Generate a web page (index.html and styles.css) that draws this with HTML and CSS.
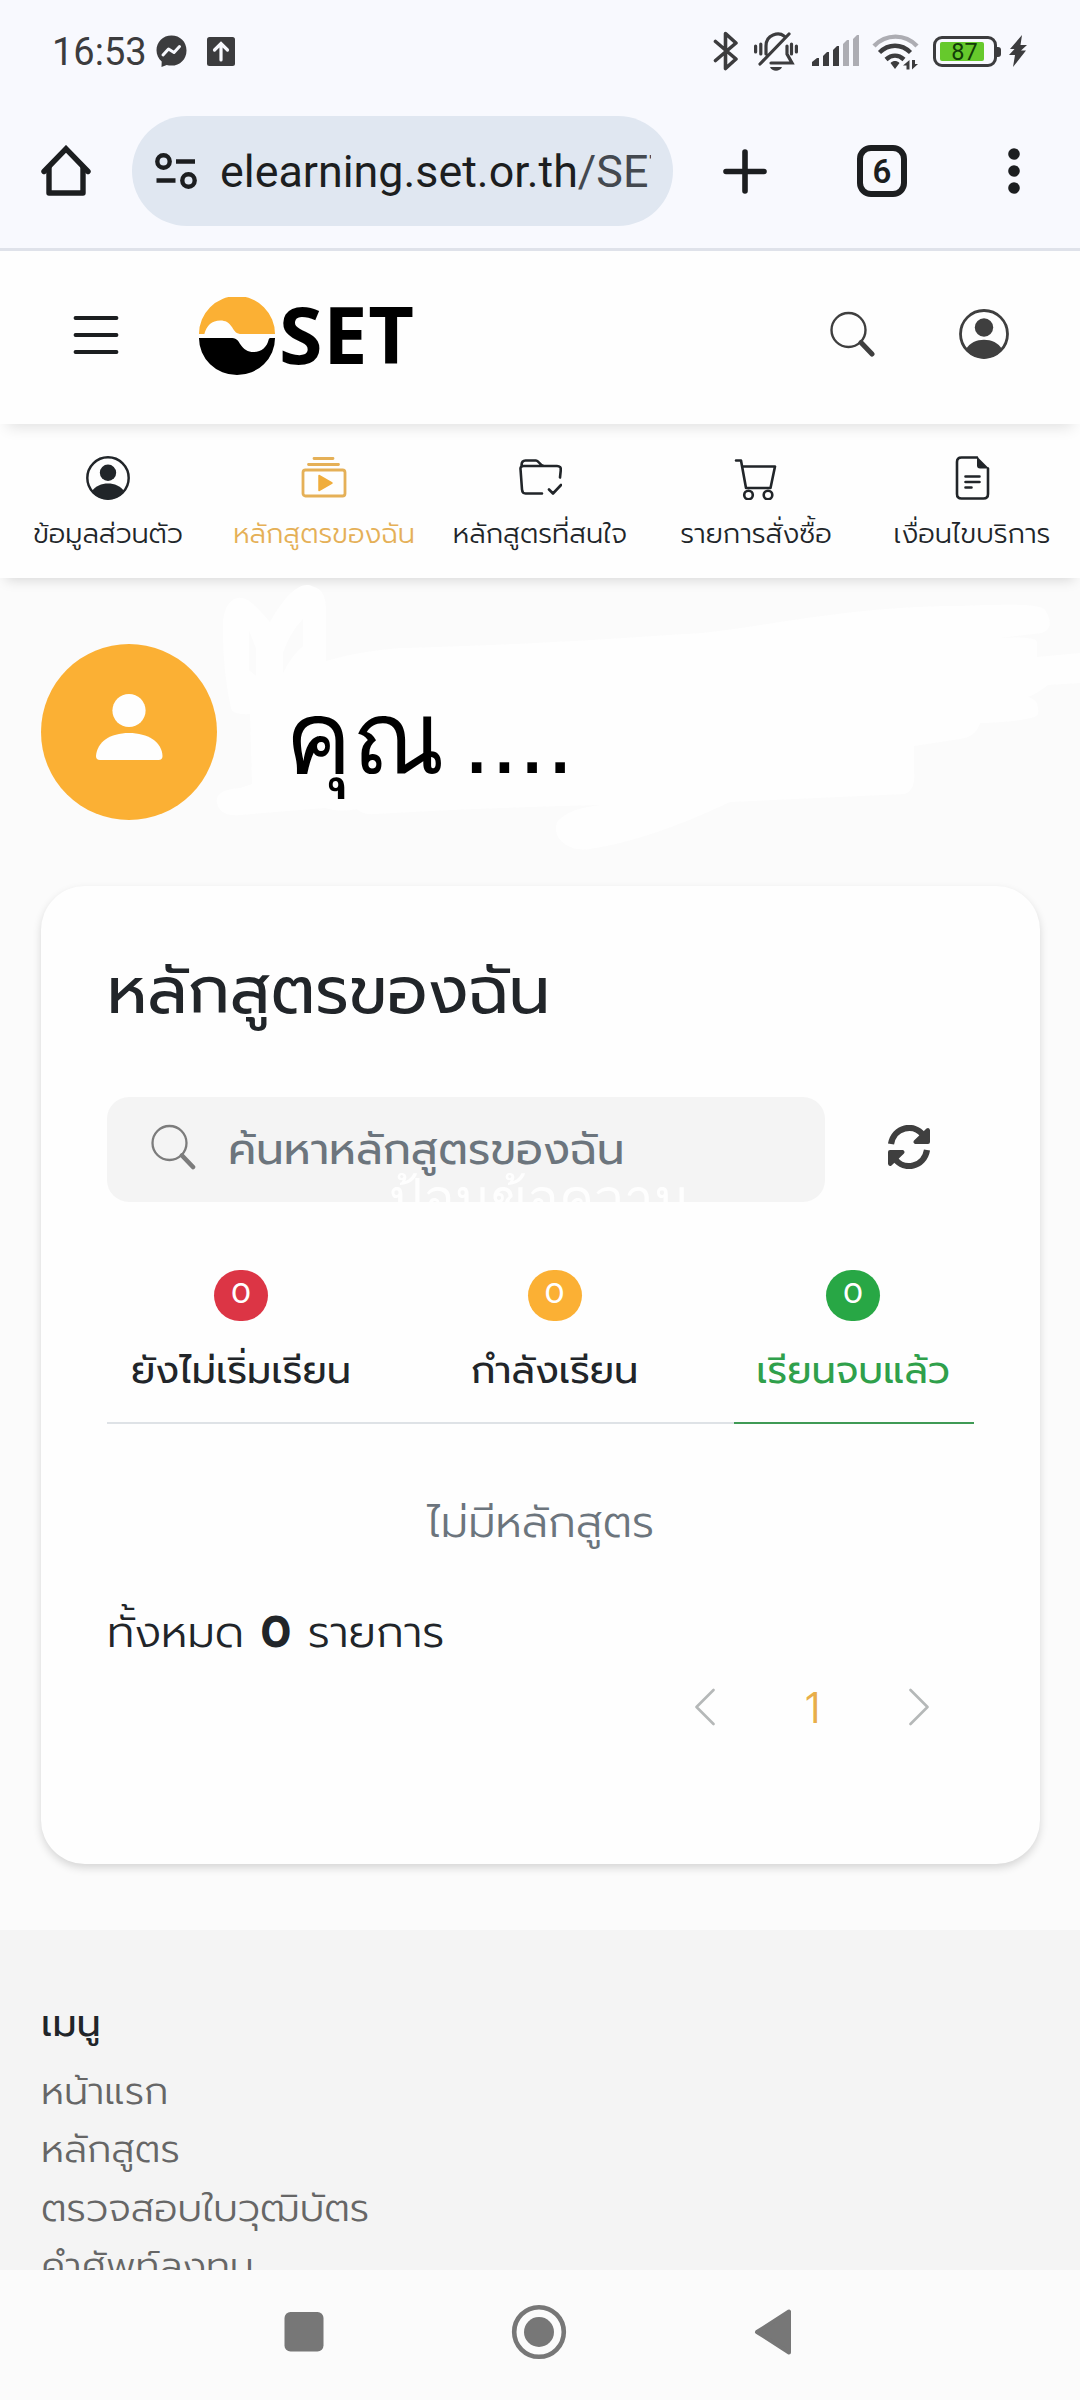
FILE: index.html
```html
<!DOCTYPE html>
<html lang="th">
<head>
<meta charset="utf-8">
<title>SET e-Learning</title>
<link rel="stylesheet" href="styles.css">
</head>
<body>
<div class="screen">
  <div class="status">
    <span class="clock">16:53</span>
    <svg class="messenger" width="31" height="33" viewBox="0 0 31 33"><path fill="#3c3c3e" d="M15.500 0.500C7 .5.5 6.800.5 15.300c0 4.600 2 8.400 5.200 11.200L5.500 32l5.200-2c1.500.4 3.100.6 4.800.6 8.500 0 15-6.500 15-15.200S24 .5 15.500.5z"/><path fill="none" stroke="#f8f9fe" stroke-width="3" stroke-linecap="round" stroke-linejoin="round" d="M7 20l5.500-6 5.500 3.500 5.500-6"/></svg>
    <svg class="upload" width="28" height="29" viewBox="0 0 28 29"><rect width="28" height="29" rx="2.500" fill="#3c3c3e"/><path fill="none" stroke="#f8f9fe" stroke-width="3.200" stroke-linecap="round" d="M14 23V7M7.500 13L14 6.500 20.500 13"/></svg>
    <svg class="bt" width="26" height="40" viewBox="0 0 26 40"><path fill="none" stroke="#3c3c3e" stroke-width="3.600" stroke-linejoin="round" stroke-linecap="round" d="M2.500 10.500L23 28 12.500 37.500V2.500L23 12 2.500 29.500"/></svg>
    <svg class="bell" width="44" height="40" viewBox="0 0 44 40"><g fill="none" stroke="#3c3c3e" stroke-width="3.200" stroke-linecap="round"><path d="M1.600 14v6M6.800 12v10M37.500 12v10M42.400 14v6M6 32L35 2M12 22V14C12 2 25 0 30 4M33 14v8l5 9H17"/></g><path fill="#3c3c3e" d="M16 35h12c-2 5-10 5-12 0z"/></svg>
    <svg class="signal" width="48" height="32" viewBox="0 0 48 32"><g fill="#3c3c3e"><path d="M0 31v-4l5-4h2v8zM11 31V21l4-4h2v14zM21 31V15l4-4h2v20z"/><path fill="#adadb3" d="M31 31V9l4-4h2v26zM41 31V4l4-4h2v31z"/></g></svg>
    <svg class="wifi" width="48" height="36" viewBox="0 0 48 36"><g fill="none" stroke="#3c3c3e" stroke-width="4.400"><path stroke="#adadb3" d="M2 12C14-.5 33-.5 45 12"/><path d="M7.500 18.500c9-9 22-9 31 0M14 25.500c5.500-5 12.500-5 18 0"/></g><path fill="#3c3c3e" d="M18.500 29c3-2.600 6-2.600 9 0L23 35zM37.500 26v9.500h-3v-4H31zM40 35.500V26h3v4h3z"/></svg>
    <span class="battery"><span class="charge">87</span></span>
    <svg class="bolt" width="20" height="32" viewBox="0 0 20 32"><path fill="#3c3c3e" d="M14 0L2 14h4.500L1 20h6L5 32 18 15.500h-5L19 10h-6.500z"/></svg>
  </div>

  <div class="toolbar">
    <svg class="home" width="50" height="52" viewBox="0 0 50 52"><path fill="none" stroke="#1c1e20" stroke-width="5.400" stroke-linejoin="round" d="M8 21v27h34V21"/><path fill="none" stroke="#1c1e20" stroke-width="5.400" stroke-linecap="round" d="M3 26.500L25 3.800 47 26.500"/></svg>
    <div class="url">
      <svg width="42" height="36" viewBox="0 0 42 36"><g fill="none" stroke="#1c1e20" stroke-width="4.400"><circle cx="8.500" cy="8.500" r="6.200"/><circle cx="33.500" cy="27.500" r="6.200"/><path d="M21 8.500h19M1.500 27.500h19"/></g></svg>
      <span class="address">elearning.set.or.th<span class="rest">/SET</span></span>
    </div>
    <svg class="plus" width="44" height="45" viewBox="0 0 44 45"><path stroke="#1c1e20" stroke-width="5.600" stroke-linecap="round" d="M22 3v39M3 22.500h38"/></svg>
    <span class="count">6</span>
    <svg class="dots" width="12" height="46" viewBox="0 0 12 46"><g fill="#1c1e20"><circle cx="6" cy="6" r="5.800"/><circle cx="6" cy="23" r="5.800"/><circle cx="6" cy="40" r="5.800"/></g></svg>
  </div>

  <header class="header">
    <svg class="menu" width="46" height="40" viewBox="0 0 46 40"><path stroke="#1c1e20" stroke-width="3.800" stroke-linecap="round" d="M2.500 3h41M2.500 20h41M2.500 37h41"/></svg>
    <svg class="mark" width="78" height="78" viewBox="0 0 78 80"><path fill="#fbb034" d="M0 38a39 39 0 0 1 78 0H44c-6 0-7.500-3-10-7-3-5-7-7-12-7C13 24 8 29 5.500 38z"/><path fill="#000" d="M0 42h32c6 0 8 2 10 6 4 6 8 8.500 14 8.500 8 0 14-5.500 15.500-13 .4-1.500 1.500-1.500 2.500-1.500h4A39 38 0 0 1 0 42z"/></svg>
    <span class="brand">SET</span>
    <svg class="find" width="45" height="46" viewBox="0 0 45 46"><circle cx="18.500" cy="19" r="17" fill="none" stroke="#3f3f3f" stroke-width="2.400"/><path stroke="#3f3f3f" stroke-width="5" stroke-linecap="round" d="M31 31.500L42 43"/></svg>
    <svg class="account" width="50" height="50" viewBox="0 0 50 50"><circle cx="25" cy="25" r="23.500" fill="none" stroke="#3f3f3f" stroke-width="2.800"/><circle cx="25" cy="18.500" r="9.200" fill="#3f3f3f"/><path fill="#3f3f3f" d="M7 40c7-12.500 29-12.500 36 0-8 12.500-28 12.500-36 0z"/></svg>
  </header>

  <nav class="nav">
    <a class="item"><svg width="44" height="44" viewBox="0 0 50 50"><circle cx="25" cy="25" r="23.500" fill="none" stroke="#212529" stroke-width="2.800"/><circle cx="25" cy="19" r="9.300" fill="#212529"/><path fill="#212529" d="M7 40c7-11.500 29-11.500 36 0-8 12.500-28 12.500-36 0z"/></svg>ข้อมูลส่วนตัว</a>
    <a class="item active"><svg width="46" height="44" viewBox="0 0 46 44"><g fill="none" stroke="#e5b057" stroke-width="2.800" stroke-linecap="round"><path d="M13 2.500h19M7.500 8.500h30"/><rect x="2" y="14" width="42" height="26" rx="2.500"/></g><path fill="#f0ad3c" stroke="#f0ad3c" stroke-width="1.500" stroke-linejoin="round" d="M18 19.500v15L31 27z"/></svg>หลักสูตรของฉัน</a>
    <a class="item"><svg width="44" height="44" viewBox="0 0 44 44"><g fill="none" stroke="#212529" stroke-width="2.600" stroke-linecap="round" stroke-linejoin="round"><path d="M24 37.500H7.500c-2.500 0-3.300-1.500-3.500-4L2.500 13c-.2-2 1-3 3-3H39c3 0 4 1.500 3.800 4L42 21.500M3.500 9.500c0-3.500 1.500-5 4-5H18c3 0 3.500 5 8 5.500M31 33.500l4 4 8-8.500"/></g></svg>หลักสูตรที่สนใจ</a>
    <a class="item"><svg width="44" height="44" viewBox="0 0 44 44"><g fill="none" stroke="#212529" stroke-width="2.600" stroke-linecap="round" stroke-linejoin="round"><path d="M2 4.500h5L12 32h24.500L41 10.500H8.500"/><circle cx="14.500" cy="39" r="4.300"/><circle cx="34" cy="39" r="4.300"/></g></svg>รายการสั่งซื้อ</a>
    <a class="item"><svg width="44" height="44" viewBox="0 0 44 44"><g transform="translate(1)"><path fill="none" stroke="#212529" stroke-width="2.600" stroke-linecap="round" stroke-linejoin="round" d="M26 1.500H10.500C7.500 1.500 6 3 6 6v32c0 3 1.500 4.500 4.500 4.500h22c3 0 4.500-1.500 4.500-4.500V12.500M14.500 20.500h14M14.500 26h14M14.500 31.500h6"/><path fill="#212529" d="M26 .5L38 12.500H29c-2 0-3-1-3-3z"/></g></svg>เงื่อนไขบริการ</a>
  </nav>

  <section class="profile">
    <svg class="brush" viewBox="0 0 1080 308"><path fill="#fefefe" d="M223 43C225 21 240 11 256 29Q265 38 270 44C282 22 300 0 314 9Q326 12 326 32V83Q360 73 400 70C530 67 620 60 702 55C770 48 850 28 960 28Q1040 24 1045 32Q1056 50 1042 55L1000 60Q1036 58 1037 64V79L1080 75V105L1048 107Q1038 115 1028 119Q1040 122 1038 136Q1036 143 980 145Q976 159 960 161L914 168V193Q916 212 905 216L730 224Q650 262 590 271C565 275 550 256 558 243Q570 230 600 227Q480 230 375 236Q362 237 357 231Q340 235 325 230L240 237Q220 239 217 225Q214 212 240 210L252 206L250 136Q232 137 231 130Q222 90 223 43z"/><path fill="#fbfbfb" d="M249 53L256 70V98L249 92zM303 41V68Q292 77 283 95V75Q290 54 303 41z"/></svg>
    <svg class="avatar" width="176" height="176" viewBox="0 0 176 176"><circle cx="88" cy="88" r="88" fill="#fbb034"/><circle cx="88" cy="66.500" r="16.600" fill="#fefefe"/><path fill="#fefefe" d="M59 116q-4 0-4-4c1-14 14-23 33-23s33 9 33.500 23q0 4-4 4z"/></svg>
    <span class="name">คุณ ....</span>
  </section>

  <section class="card">
    <h1>หลักสูตรของฉัน</h1>
    <div class="search-row">
      <div class="search">
        <svg width="45" height="46" viewBox="0 0 45 46"><circle cx="18.500" cy="19" r="17" fill="none" stroke="#7c7c7c" stroke-width="2.300"/><path stroke="#7c7c7c" stroke-width="4.600" stroke-linecap="round" d="M31 31.500L42 43"/></svg>
        <span>ค้นหาหลักสูตรของฉัน</span>
        <span class="ghost">ป้อนข้อความ</span>
      </div>
      <svg class="refresh" width="44" height="44" viewBox="0 0 44 44"><g fill="none" stroke="#3f3f3f" stroke-width="6.200"><path d="M4 19C7 1.500 27-2 36 10M40 25C37 42.500 17 46 8 34"/></g><path fill="#3f3f3f" d="M43 5v12q0 2-2 2H28q-2.500-1.500-1-3.500L39.500 3.500Q42 2 43 5zM1 39V27q0-2 2-2h13q2.500 1.500 1 3.500L4.500 40.500Q2 42 1 39z"/></svg>
    </div>
    <div class="tabs">
      <div class="tab"><span class="badge red">0</span><span class="label">ยังไม่เริ่มเรียน</span></div>
      <div class="tab"><span class="badge orange">0</span><span class="label">กำลังเรียน</span></div>
      <div class="tab current"><span class="badge green">0</span><span class="label">เรียนจบแล้ว</span></div>
    </div>
    <p class="empty">ไม่มีหลักสูตร</p>
    <p class="total">ทั้งหมด <b>0</b> รายการ</p>
    <div class="pager">
      <svg width="20" height="38" viewBox="0 0 20 38"><path fill="none" stroke="#b5b8b8" stroke-width="2.600" stroke-linecap="round" stroke-linejoin="round" d="M18.500 2L1.500 19l17 17"/></svg>
      <span>1</span>
      <svg width="20" height="38" viewBox="0 0 20 38"><path fill="none" stroke="#b5b8b8" stroke-width="2.600" stroke-linecap="round" stroke-linejoin="round" d="M1.500 2l17 17-17 17"/></svg>
    </div>
  </section>

  <footer class="footer">
    <h2>เมนู</h2>
    <a>หน้าแรก</a>
    <a>หลักสูตร</a>
    <a>ตรวจสอบใบวุฒิบัตร</a>
    <a>คำศัพท์ลงทุน</a>
  </footer>

  <div class="system">
    <svg width="40" height="56" viewBox="0 0 40 56"><rect x=".5" y="8" width="39" height="39.500" rx="6" fill="#777"/></svg>
    <svg width="56" height="56" viewBox="0 0 56 56"><circle cx="28" cy="28" r="24.800" fill="none" stroke="#777" stroke-width="4.600"/><circle cx="28" cy="28" r="15" fill="#777"/></svg>
    <svg width="38" height="56" viewBox="0 0 38 56"><path fill="#777" stroke="#777" stroke-width="4" stroke-linejoin="round" d="M35 7.500v41L3 28z"/></svg>
  </div>
</div>
</body>
</html>
```
FILE: styles.css
```css
* { box-sizing: border-box; }
body { margin: 0; background: #fbfbfb; }
svg { display: block; flex: none; }
h1, h2, p { margin: 0; }

.screen {
  width: 1080px;
  height: 2400px;
  display: flex;
  flex-direction: column;
  overflow: hidden;
  background: #fbfbfb;
  color: #212529;
  font-family: Prompt, "Noto Sans Thai", "Open Sans", sans-serif;
  font-weight: 300;
}
.screen > * { flex: none; }

.status {
  height: 102px;
  padding-left: 52px;
  display: flex;
  align-items: center;
  background: #f8f9fe;
}
.clock {
  width: 104px;
  font: 400 38px/44px Roboto, sans-serif;
  color: #3c3c3e;
  padding-top: 2px;
}
.upload { margin-left: 20px; }
.bt { margin-left: 478px; }
.bell { margin-left: 15px; margin-top: 2px; }
.signal { margin-left: 14px; }
.wifi { margin-left: 12px; margin-top: 2px; }
.battery {
  position: relative;
  width: 64px;
  height: 31px;
  margin-left: 13px;
  padding: 4px;
  border: 3px solid #3c3c3e;
  border-radius: 9px;
}
.battery::after {
  content: "";
  position: absolute;
  left: 61px;
  top: 8px;
  width: 4px;
  height: 10px;
  border-radius: 0 3px 3px 0;
  background: #3c3c3e;
}
.charge {
  display: block;
  width: 44px;
  height: 19px;
  margin-top: -1px;
  padding-left: 5px;
  border-radius: 2px;
  background: #66c92c;
  color: #123c08;
  font: 400 23.500px/21px Roboto, sans-serif;
  text-align: center;
}
.bolt { margin-left: 11px; }

.toolbar {
  height: 149px;
  padding: 14px 0 0 41px;
  display: flex;
  align-items: flex-start;
  background: #f8f9fe;
  border-bottom: 3px solid #dfe2ea;
}
.home { margin-top: 29px; }
.url {
  width: 541px;
  height: 110px;
  margin-left: 41px;
  padding: 0 22px 0 23px;
  display: flex;
  align-items: center;
  border-radius: 55px;
  background: #e0e7f1;
}
.address {
  flex: 1;
  height: 70px;
  margin: 2px 0 0 23px;
  overflow: hidden;
  white-space: nowrap;
  font: 400 44.800px/70px Roboto, sans-serif;
  color: #1c1e20;
}
.rest { color: #444950; }
.plus { margin: 33px 0 0 50px; }
.count {
  width: 50px;
  height: 52px;
  margin: 29px 0 0 90px;
  border: 6px solid #1c1e20;
  border-radius: 14px;
  font: 600 33px/42px Roboto, sans-serif;
  text-align: center;
  color: #1c1e20;
}
.dots { margin: 32px 0 0 101px; }

.header {
  position: relative;
  height: 173px;
  padding-left: 73px;
  display: flex;
  align-items: center;
  background: #fefefe;
  box-shadow: 0 10px 14px -7px rgba(0, 0, 0, .12);
}
.menu { margin-top: -5px; }
.mark { margin: -3px 0 0 79px; }
.brand {
  width: 140px;
  margin: -7px 0 0 3px;
  font: 700 79px/80px "Open Sans", sans-serif;
  letter-spacing: .8px;
  color: #000;
}
.find { margin: -7px 0 0 411px; }
.account { margin: -8px 0 0 84px; }

.nav {
  height: 154px;
  padding-top: 32px;
  display: grid;
  grid-template-columns: repeat(5, 1fr);
  background: #fefefe;
  box-shadow: 0 8px 12px -6px rgba(0, 0, 0, .15);
}
.item {
  display: flex;
  flex-direction: column;
  align-items: center;
  gap: 14px;
  font-size: 27.500px;
  line-height: 40px;
  white-space: nowrap;
}
.item.active { color: #e5b057; }

.profile {
  position: relative;
  height: 308px;
  padding: 66px 41px;
  display: flex;
}
.brush { position: absolute; left: 0; top: 0; width: 1080px; height: 308px; }
.avatar { position: relative; }
.name {
  position: relative;
  margin: 34px 0 0 68px;
  font: 400 100px/120px sans-serif;
  word-spacing: -10px;
  color: #000;
  white-space: nowrap;
}

.card {
  height: 978px;
  margin: 0 40px 0 41px;
  padding: 65px 66px;
  border-radius: 44px;
  background: #fefefe;
  box-shadow: 0 4px 9px rgba(0, 0, 0, .15);
}
h1 { font-size: 66px; line-height: 80px; font-weight: 400; }
.search-row {
  margin-top: 66px;
  display: flex;
  align-items: center;
}
.search {
  position: relative;
  width: 718px;
  height: 105px;
  padding-left: 44px;
  display: flex;
  align-items: center;
  gap: 32px;
  overflow: hidden;
  border-radius: 22px;
  background: #f4f4f4;
  font-size: 44px;
  line-height: 60px;
  font-weight: 400;
  color: #6c757d;
}
.search svg { margin-top: -6px; }
.ghost {
  position: absolute;
  left: 282px;
  top: 69px;
  font: 400 53px/66px sans-serif;
  color: #fefefe;
}
.refresh { margin: -6px 0 0 62px; }

.tabs {
  margin-top: 68px;
  display: flex;
  justify-content: space-between;
  box-shadow: inset 0 -2px #dee2e6;
}
.tab {
  height: 154px;
  padding: 0 22px 0 24px;
  display: flex;
  flex-direction: column;
  align-items: center;
  gap: 20px;
  font-weight: 400;
}
.current { padding: 0 24px 0 22px; color: #2fa04b; border-bottom: 2px solid #3f9a55; }
.badge {
  width: 54px;
  height: 51px;
  border-radius: 27px;
  font-size: 29px;
  line-height: 46px;
  font-weight: 400;
  text-align: center;
  color: #fff;
}
.red { background: #dc3545; }
.orange { background: #fbb034; }
.green { background: #28a745; }
.label { font-size: 38.500px; line-height: 58px; white-space: nowrap; }

.empty { margin-top: 66px; font-size: 44px; line-height: 66px; text-align: center; color: #6c757d; }
.total { margin-top: 44px; font-size: 44px; line-height: 66px; }
.total b { font-weight: 600; }
.pager {
  margin-top: 10px;
  padding-right: 45px;
  display: flex;
  justify-content: flex-end;
  align-items: center;
  gap: 89px;
  font-size: 44px;
  line-height: 66px;
  color: #e8ae4a;
}
.pager svg { margin-top: -4px; }

.footer {
  height: 340px;
  margin-top: 66px;
  padding: 64px 41px 0;
  display: flex;
  flex-direction: column;
  overflow: hidden;
  background: #f4f4f4;
  font-size: 38.500px;
  line-height: 58.200px;
  color: #666;
}
h2 { margin-bottom: 10px; font-size: 38.500px; font-weight: 400; color: #212529; }
.footer > * { flex: none; }

.system {
  height: 130px;
  padding: 34px 288px 0 284px;
  display: flex;
  justify-content: space-between;
  background: #fbfbfb;
}
```
